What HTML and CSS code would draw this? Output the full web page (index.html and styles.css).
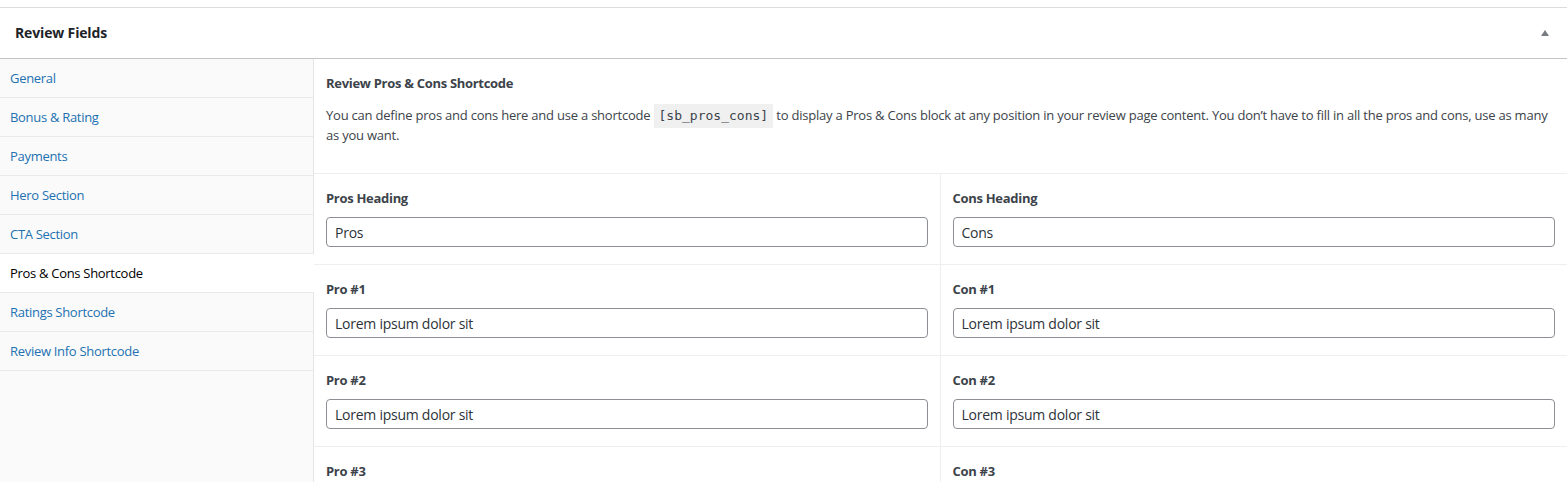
FILE: index.html
```html
<!DOCTYPE html>
<html lang="en">
<head>
<meta charset="utf-8">
<title>Review Fields</title>
<link rel="stylesheet" href="styles.css">
</head>
<body>
<div class="postbox">
  <div class="postbox-header">
    <h2 class="postbox-title">Review Fields</h2>
    <button class="toggle" type="button" aria-label="Toggle panel">
      <svg width="10" height="6" viewBox="0 0 10 6"><polygon points="5,0 9,6 1,6" fill="#787c82"/></svg>
    </button>
  </div>
  <div class="inside">
    <ul class="tabs">
      <li class="tab"><a href="#">General</a></li>
      <li class="tab"><a href="#">Bonus &amp; Rating</a></li>
      <li class="tab"><a href="#">Payments</a></li>
      <li class="tab"><a href="#">Hero Section</a></li>
      <li class="tab"><a href="#">CTA Section</a></li>
      <li class="tab active"><a href="#">Pros &amp; Cons Shortcode</a></li>
      <li class="tab"><a href="#">Ratings Shortcode</a></li>
      <li class="tab"><a href="#">Review Info Shortcode</a></li>
    </ul>
    <div class="panel">
      <div class="intro">
        <h3 class="intro-title">Review Pros &amp; Cons Shortcode</h3>
        <p class="intro-text">You can define pros and cons here and use a shortcode <code class="code">[sb_pros_cons]</code> to display a Pros &amp; Cons block at any position in your review page content. You don’t have to fill in all the pros and cons, use as many as you want.</p>
      </div>
      <div class="grid">
        <div class="cell"><label class="label">Pros Heading</label><input class="input" type="text" value="Pros"></div>
        <div class="cell"><label class="label">Cons Heading</label><input class="input" type="text" value="Cons"></div>
        <div class="cell"><label class="label">Pro #1</label><input class="input" type="text" value="Lorem ipsum dolor sit"></div>
        <div class="cell"><label class="label">Con #1</label><input class="input" type="text" value="Lorem ipsum dolor sit"></div>
        <div class="cell"><label class="label">Pro #2</label><input class="input" type="text" value="Lorem ipsum dolor sit"></div>
        <div class="cell"><label class="label">Con #2</label><input class="input" type="text" value="Lorem ipsum dolor sit"></div>
        <div class="cell"><label class="label">Pro #3</label><input class="input" type="text" value="Lorem ipsum dolor sit"></div>
        <div class="cell"><label class="label">Con #3</label><input class="input" type="text" value="Lorem ipsum dolor sit"></div>
      </div>
    </div>
  </div>
</div>
</body>
</html>
```
FILE: styles.css
```css
* { box-sizing: border-box; }
html, body {
  margin: 0;
  padding: 0;
  background: #fff;
  font-family: "Open Sans", "Noto Sans", sans-serif;
  color: #3c434a;
  font-size: 13px;
  letter-spacing: -0.3px;
  overflow: hidden;
}
.postbox {
  margin-top: 7px;
  border-top: 1px solid #dcdcde;
  background: #fff;
}
.postbox-header {
  height: 51px;
  border-bottom: 1px solid #c3c4c7;
  display: flex;
  align-items: center;
  justify-content: space-between;
}
.postbox-title {
  margin: 0;
  padding-left: 15px;
  font-size: 14px;
  font-weight: 700;
  color: #1d2327;
  line-height: 1.4;
  letter-spacing: -0.15px;
}
.toggle {
  border: 0;
  background: none;
  padding: 0;
  width: 36px;
  height: 36px;
  margin-right: 4px;
  display: flex;
  align-items: center;
  justify-content: center;
}
.inside {
  display: flex;
  min-height: 500px;
}
.tabs {
  list-style: none;
  margin: 0;
  padding: 0;
  width: 314px;
  flex: none;
  background: #fafafa;
  border-right: 1px solid #e5e5e5;
}
.tab {
  height: 39px;
  border-bottom: 1px solid #e9e9e9;
  display: flex;
  align-items: center;
  padding-left: 10px;
}
.tab a {
  color: #2271b1;
  text-decoration: none;
  font-size: 13px;
}
.tab.active {
  background: #fff;
  margin-right: -1px;
}
.tab.active a { color: #000; }
.panel {
  flex: 1;
  min-width: 0;
}
.intro {
  padding: 14px 12px 28px;
  border-bottom: 1px solid #eee;
}
.intro-title {
  margin: 0 0 12px;
  font-size: 13px;
  line-height: 20px;
  font-weight: 700;
  color: #3c434a;
}
.intro-text {
  margin: 0;
  font-size: 13px;
  line-height: 20px;
  letter-spacing: -0.22px;
  color: #3c434a;
}
.code {
  font-family: "DejaVu Sans Mono", "Liberation Mono", monospace;
  font-size: 13px;
  line-height: 1;
  letter-spacing: 0;
  background: #f0f0f1;
  padding: 4px 5px 5px;
  color: #3c434a;
}
.grid {
  display: grid;
  grid-template-columns: 1fr 1fr;
}
.cell {
  padding: 14px 12px 17px;
  border-bottom: 1px solid #eee;
}
.cell:nth-child(odd) { border-right: 1px solid #eee; }
.label {
  display: block;
  font-size: 13px;
  font-weight: 700;
  line-height: 20px;
  margin-bottom: 9px;
  color: #3c434a;
}
.input {
  display: block;
  width: 100%;
  height: 30px;
  border: 1px solid #8c8f94;
  border-radius: 4px;
  padding: 0 8px;
  font-family: inherit;
  font-size: 14px;
  letter-spacing: -0.25px;
  color: #2c3338;
  background: #fff;
}
```
